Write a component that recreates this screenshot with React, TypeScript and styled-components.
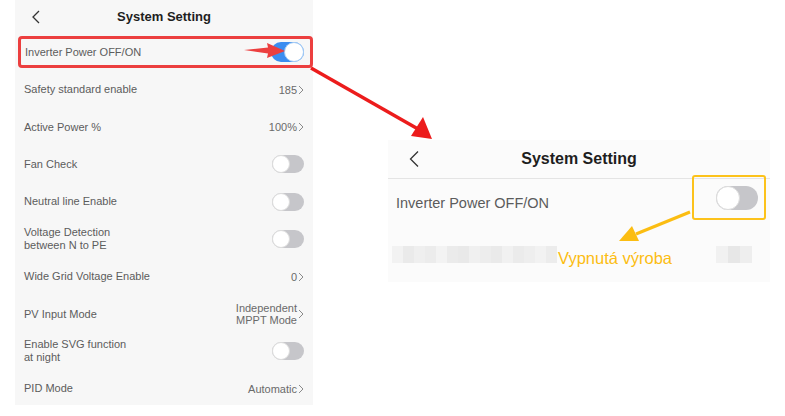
import React from "react";
import styled, { createGlobalStyle } from "styled-components";

const Global = createGlobalStyle`
  html, body { margin: 0; padding: 0; background: #ffffff; }
  body { font-family: "Liberation Sans", Arial, sans-serif; width: 785px; height: 416px; overflow: hidden; }
`;

const Page = styled.div`
  position: relative;
  width: 785px;
  height: 416px;
  display: flex;
  align-items: flex-start;
`;

const Phone = styled.div`
  margin-left: 15px;
  width: 298px;
  height: 405px;
  background: #f7f7f7;
  display: flex;
  flex-direction: column;
`;

const Header = styled.div<{ $big?: boolean }>`
  position: relative;
  height: ${(p) => (p.$big ? 36 : 33)}px;
  display: flex;
  align-items: center;
  justify-content: center;
  font-weight: bold;
  font-size: ${(p) => (p.$big ? 16 : 13)}px;
  color: #1e1e1e;
  flex-shrink: 0;
`;

const Back = styled.svg<{ $left: number }>`
  position: absolute;
  left: ${(p) => p.$left}px;
  top: 50%;
  transform: translateY(-50%);
`;

const Row = styled.div`
  height: 37.4px;
  display: flex;
  align-items: center;
  justify-content: space-between;
  padding: 0 9px 0 9px;
  font-size: 11px;
  color: #5c5c5c;
  flex-shrink: 0;
  box-sizing: border-box;
`;

const Label = styled.div`
  line-height: 13px;
`;

const Value = styled.div`
  display: flex;
  align-items: center;
  gap: 1px;
  color: #6a6a6a;
  font-size: 11px;
  text-align: right;
  line-height: 12px;
`;

const Highlight = styled.div`
  margin: 3px 0 3px 3px;
  width: 295px;
  height: 32px;
  box-sizing: border-box;
  border: 3px solid #ec3f3f;
  border-radius: 4px;
  display: flex;
  align-items: center;
  justify-content: space-between;
  padding: 0 6px 0 4px;
  font-size: 11px;
  color: #5c5c5c;
  background: #f7f7f7;
  position: relative;
  flex-shrink: 0;
`;

const Track = styled.div<{ $on?: boolean; $w: number; $h: number }>`
  width: ${(p) => p.$w}px;
  height: ${(p) => p.$h}px;
  border-radius: ${(p) => p.$h / 2}px;
  background: ${(p) => (p.$on ? "#3b8df0" : "#c6c6ca")};
  position: relative;
  flex-shrink: 0;
  box-sizing: border-box;
`;

const Knob = styled.div<{ $on?: boolean; $size: number }>`
  position: absolute;
  top: 0;
  ${(p) => (p.$on ? "right: 0;" : "left: 0;")}
  width: ${(p) => p.$size}px;
  height: ${(p) => p.$size}px;
  border-radius: 50%;
  background: #ffffff;
  box-sizing: border-box;
  border: 1.5px solid ${(p) => (p.$on ? "#a7cdf5" : "#dcdcdc")};
`;

const Toggle = ({ on, w = 32, h = 18 }: { on?: boolean; w?: number; h?: number }) => (
  <Track $on={on} $w={w} $h={h}>
    <Knob $on={on} $size={h} />
  </Track>
);

const Chevron = () => (
  <svg width="6" height="10" viewBox="0 0 6 10">
    <path d="M1 1 L5 5 L1 9" fill="none" stroke="#8a8a8a" strokeWidth="1" />
  </svg>
);

const Right = styled.div`
  margin-top: 140px;
  margin-left: 75px;
  width: 382px;
  height: 142px;
  background: #fbfbfb;
  display: flex;
  flex-direction: column;
`;

const RHeader = styled(Header)`
  height: 38px;
  border-bottom: 1px solid #e4e4e4;
`;

const RRow = styled.div`
  height: 47px;
  display: flex;
  align-items: center;
  justify-content: space-between;
  padding: 0 12px 0 8px;
  font-size: 14.5px;
  color: #5c5c5c;
  position: relative;
  flex-shrink: 0;
`;

const YellowBox = styled.div`
  position: absolute;
  right: 4px;
  top: -4px;
  width: 74px;
  height: 45px;
  box-sizing: border-box;
  border: 2px solid #fcc21b;
  border-radius: 3px;
  display: flex;
  align-items: center;
  padding-left: 22px;
`;

const BlurRow = styled.div`
  height: 56px;
  display: flex;
  align-items: center;
  padding: 0 4px;
  position: relative;
  flex-shrink: 0;
`;

const Pix = styled.div<{ $w: number; $c: string }>`
  width: ${(p) => p.$w}px;
  height: 17px;
  background: ${(p) => p.$c};
  flex-shrink: 0;
`;

const PixGroup = styled.div`
  display: flex;
`;

const Spacer = styled.div`
  flex: 1;
`;

const Note = styled.div`
  position: absolute;
  left: 170px;
  top: 23px;
  color: #fbbd12;
  font-size: 16.5px;
`;

const Overlay = styled.svg`
  position: absolute;
  left: 0;
  top: 0;
  pointer-events: none;
`;

const rows: { label: React.ReactNode; value?: React.ReactNode; toggle?: boolean }[] = [
  { label: "Safety standard enable", value: "185" },
  { label: "Active Power %", value: "100%" },
  { label: "Fan Check", toggle: true },
  { label: "Neutral line Enable", toggle: true },
  { label: <>Voltage Detection<br />between N to PE</>, toggle: true },
  { label: "Wide Grid Voltage Enable", value: "0" },
  { label: "PV Input Mode", value: <>Independent<br />MPPT Mode</> },
  { label: <>Enable SVG function<br />at night</>, toggle: true },
  { label: "PID Mode", value: "Automatic" },
];

const leftPix = ["#f2f2f2", "#eaeaea", "#efefef", "#ececec", "#f3f3f3", "#ebebeb", "#e9e9e9", "#f0f0f0", "#ededed", "#eaeaea", "#f1f1f1", "#ebebeb", "#eeeeee", "#f2f2f2", "#ececec"];

export default function App() {
  return (
    <>
      <Global />
      <Page>
        <Phone>
          <Header>
            <Back $left={17} width="8" height="14" viewBox="0 0 8 14">
              <path d="M7 1 L1 7 L7 13" fill="none" stroke="#333" strokeWidth="1.3" />
            </Back>
            System Setting
          </Header>
          <Highlight>
            <span>Inverter Power OFF/ON</span>
            <Toggle on w={33} h={20} />
          </Highlight>
          {rows.map((r, i) => (
            <Row key={i}>
              <Label>{r.label}</Label>
              {r.toggle ? (
                <Toggle />
              ) : (
                <Value>
                  <span>{r.value}</span>
                  <Chevron />
                </Value>
              )}
            </Row>
          ))}
        </Phone>
        <Right>
          <RHeader $big>
            <Back $left={21} width="10" height="17" viewBox="0 0 10 17">
              <path d="M9 1 L1.5 8.5 L9 16" fill="none" stroke="#333" strokeWidth="1.3" />
            </Back>
            System Setting
          </RHeader>
          <RRow>
            <span>Inverter Power OFF/ON</span>
            <YellowBox>
              <Toggle w={42} h={24} />
            </YellowBox>
          </RRow>
          <BlurRow>
            <PixGroup>
              {leftPix.map((c, i) => (
                <Pix key={i} $w={11} $c={c} />
              ))}
            </PixGroup>
            <Note>Vypnutá výroba</Note>
            <Spacer />
            <PixGroup>
              <Pix $w={12} $c="#f1f1f1" />
              <Pix $w={12} $c="#e7e7e7" />
              <Pix $w={12} $c="#eeeeee" />
            </PixGroup>
            <Pix $w={14} $c="transparent" />
          </BlurRow>
        </Right>
        <Overlay width="785" height="416" viewBox="0 0 785 416">
          <polygon points="244,50 268,47.5 267,43 285,51 267,58 268,53.5" fill="#ec3f3f" />
          <line x1="311" y1="68" x2="418" y2="129" stroke="#ec1c1c" strokeWidth="3.5" />
          <polygon points="432,139 411,136 423,117" fill="#ec1c1c" />
          <line x1="690" y1="212" x2="636" y2="234" stroke="#fbbd12" strokeWidth="3" />
          <polygon points="619,241 632,226 639,241" fill="#fbbd12" />
        </Overlay>
      </Page>
    </>
  );
}
